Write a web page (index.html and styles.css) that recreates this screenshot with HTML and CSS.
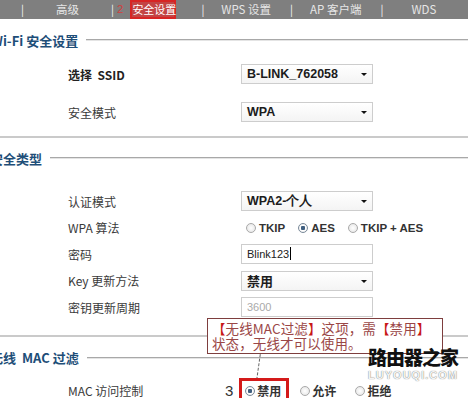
FILE: index.html
```html
<!DOCTYPE html>
<html>
    <head>
        <title>无线安全设置</title>
        <link rel="stylesheet" href="styles.css">
    </head>
    <body>
        <nav class="nav">
            <span class="sep s1">|</span>
            <span class="item i1">高级</span>
            <span class="sep s2">|</span>
            <span class="step">2</span>
            <span class="item active">安全设置</span>
            <span class="sep s3">|</span>
            <span class="item i3">WPS 设置</span>
            <span class="sep s4">|</span>
            <span class="item i4">AP 客户端</span>
            <span class="sep s5">|</span>
            <span class="item i5">WDS</span>
        </nav>

        <h3 class="title t1">Wi-Fi 安全设置</h3>
        <section class="group g1">
            <div class="row tall">
                <label class="strong">选择 &nbsp;SSID</label>
                <div class="select">B-LINK_762058</div>
            </div>
            <div class="row tall">
                <label>安全模式</label>
                <div class="select">WPA</div>
            </div>
        </section>
        <hr class="divider d1" />

        <h3 class="title t2">安全类型</h3>
        <section class="group g2">
            <div class="row">
                <label>认证模式</label>
                <div class="select">WPA2-个人</div>
            </div>
            <div class="row">
                <label>WPA 算法</label>
                <div class="radios">
                    <span class="radio"></span><b>TKIP</b>
                    <span class="radio on"></span><b>AES</b>
                    <span class="radio"></span><b>TKIP + AES</b>
                </div>
            </div>
            <div class="row">
                <label>密码</label>
                <div class="input">Blink123<span class="caret"></span></div>
            </div>
            <div class="row">
                <label>Key 更新方法</label>
                <div class="select cn">禁用</div>
            </div>
            <div class="row">
                <label>密钥更新周期</label>
                <div class="input off">3600</div>
            </div>
        </section>
        <hr class="divider d2" />

        <h3 class="title t3">无线 &nbsp;MAC 过滤</h3>
        <section class="group g3">
            <div class="row">
                <label>MAC 访问控制</label>
                <div class="radios mac">
                    <span class="num">3</span>
                    <span class="radio on"></span><b>禁用</b>
                    <span class="radio"></span><b>允许</b>
                    <span class="radio"></span><b>拒绝</b>
                </div>
            </div>
        </section>

        <div class="note">
            <span class="br">【</span>无线MAC过滤<span class="br">】</span>这项，需<span class="br">【</span>禁用<span class="br">】</span><br />状态，无线才可以使用。
        </div>
        <div class="pointer"></div>
        <div class="mark"></div>
        <div class="logo">
            <div class="logo-cn">路由器之家</div>
            <div class="logo-en">LUYOUQI.COM</div>
        </div>
    </body>
</html>
```

FILE: styles.css
```css
*{
    box-sizing: border-box;
}
html{
    overflow: hidden;
    background: #FFF;
}
body{
    margin: 0;
    width: 468px;
    height: 398px;
    overflow: hidden;
    position: relative;
    font-family: "Noto Sans CJK SC", "Liberation Sans", sans-serif;
    font-size: 12px;
    color: #333;
}
.nav{
    display: flex;
    align-items: center;
    height: 19px;
    background: #7F7F7F;
    color: #E6E6E6;
    font-size: 11.5px;
    line-height: 19px;
    white-space: nowrap;
}
.sep{
    color: #F4F4F4;
    font-size: 11px;
}
.s1{ margin-left: 21px; }
.i1{ margin-left: 32px; }
.s2{ margin-left: 32px; }
.step{
    margin-left: 3px;
    color: #D04040;
    font-family: "Liberation Sans", sans-serif;
}
.item.active{
    margin-left: 7px;
    width: 46px;
    height: 19px;
    background: #C34444;
    border: 2px solid #D82424;
    color: #FFF;
    line-height: 15px;
    text-align: center;
    font-size: 11px;
}
.s3{ margin-left: 25px; }
.i3{ margin-left: 17px; }
.s4{ margin-left: 19px; }
.i4{ margin-left: 17px; }
.s5{ margin-left: 19px; }
.i5{ margin-left: 28px; }

.title{
    display: flex;
    align-items: center;
    height: 20px;
    margin: 11px 0 0 -10px;
    font-size: 13px;
    font-weight: bold;
    color: #1E4E78;
    white-space: nowrap;
}
.title::after{
    content: "";
    flex: 1;
    margin-left: 8px;
    border-top: 1px solid #A8A8A8;
    border-bottom: 1px solid #E4E4E4;
}
.t1{ margin-left: -9px; }
.t2{ margin-top: 10px; }
.t3{ margin-top: 11px; }

.group{
    padding-left: 68px;
}
.g1{ margin-top: 5px; }
.g2{ margin-top: 20px; }
.g3{ margin-top: 10px; }
.row{
    display: grid;
    grid-template-columns: 173px 132px;
    align-items: center;
    height: 26.5px;
}
.row.tall{
    height: 38px;
}
label{
    color: #3A3A3A;
}
label.strong{
    font-weight: bold;
    color: #222;
}
.divider{
    margin: 0;
    border: 0;
    border-top: 2px solid #CACACA;
}
.d1{ margin-top: 5px; }
.d2{ margin-top: 14px; }

.select, .input{
    position: relative;
    height: 20px;
    padding: 0 5px;
    border: 1px solid #CDCDCD;
    background: linear-gradient(#FFF, #F4F4F4);
    font-family: "Liberation Sans", sans-serif;
    font-size: 12.5px;
    font-weight: bold;
    line-height: 18px;
    color: #1C1C1C;
}
.select.cn{
    font-family: "Noto Sans CJK SC", sans-serif;
    font-size: 13px;
}
.select::after{
    content: "";
    position: absolute;
    right: 5px;
    top: 8px;
    border: 3px solid transparent;
    border-top: 3px solid #111;
    border-width: 3px 3px 0;
}
.input{
    background: #FFF;
    font-weight: normal;
    font-size: 11px;
    color: #222;
}
.input.off{
    color: #AAA;
}
.caret{
    display: inline-block;
    width: 1px;
    height: 13px;
    margin-left: 1px;
    vertical-align: -2px;
    background: #000;
}
.radios{
    display: flex;
    align-items: center;
    white-space: nowrap;
    padding-left: 5px;
    font-family: "Liberation Sans", sans-serif;
    font-size: 11.5px;
    color: #333;
}
.radios b{
    flex: none;
    margin: 0 13px 0 3px;
}
.radio{
    flex: none;
    display: inline-block;
    width: 10px;
    height: 10px;
    border: 1px solid #A9A9A9;
    border-radius: 50%;
    background: radial-gradient(#FFF, #E2E2E2);
}
.radio.on{
    background: radial-gradient(#3F5F80 0 2px, #FFF 2.5px, #E2E2E2);
    border-color: #7A8A9A;
}
.mac{
    margin-left: -21px;
}
.mac .num{
    flex: none;
    margin-right: 12px;
    font-size: 15px;
    color: #333;
}
.mac b{
    font-family: "Noto Sans CJK SC", sans-serif;
    font-size: 12px;
    margin: 0 19px 0 2px;
}

.note{
    position: absolute;
    left: 207px;
    top: 318px;
    width: 236px;
    height: 36px;
    padding: 2px 0 0 4px;
    border: 1.5px solid #7E3E3E;
    background: #FFF;
    font-size: 13.5px;
    line-height: 15px;
    color: #9A4646;
    white-space: nowrap;
    letter-spacing: 0.1px;
}
.br{
    color: #C81818;
}
.pointer{
    position: absolute;
    left: 258px;
    top: 354px;
    height: 26px;
    border-left: 1px dashed #666;
    transform: rotate(8deg);
}
.mark{
    position: absolute;
    left: 239px;
    top: 378px;
    width: 50px;
    height: 30px;
    border: 3px solid #D41A1A;
    border-bottom: 0;
}
.logo{
    position: absolute;
    left: 368px;
    top: 345px;
    text-align: center;
}
.logo-cn{
    font-size: 19px;
    font-weight: 900;
    line-height: 24px;
    color: #111;
    letter-spacing: -1px;
}
.logo-en{
    font-family: "Liberation Sans", sans-serif;
    font-size: 11px;
    font-weight: bold;
    color: #F4F4F4;
    text-shadow: 0 0 1px #555;
    letter-spacing: 1px;
}
```
